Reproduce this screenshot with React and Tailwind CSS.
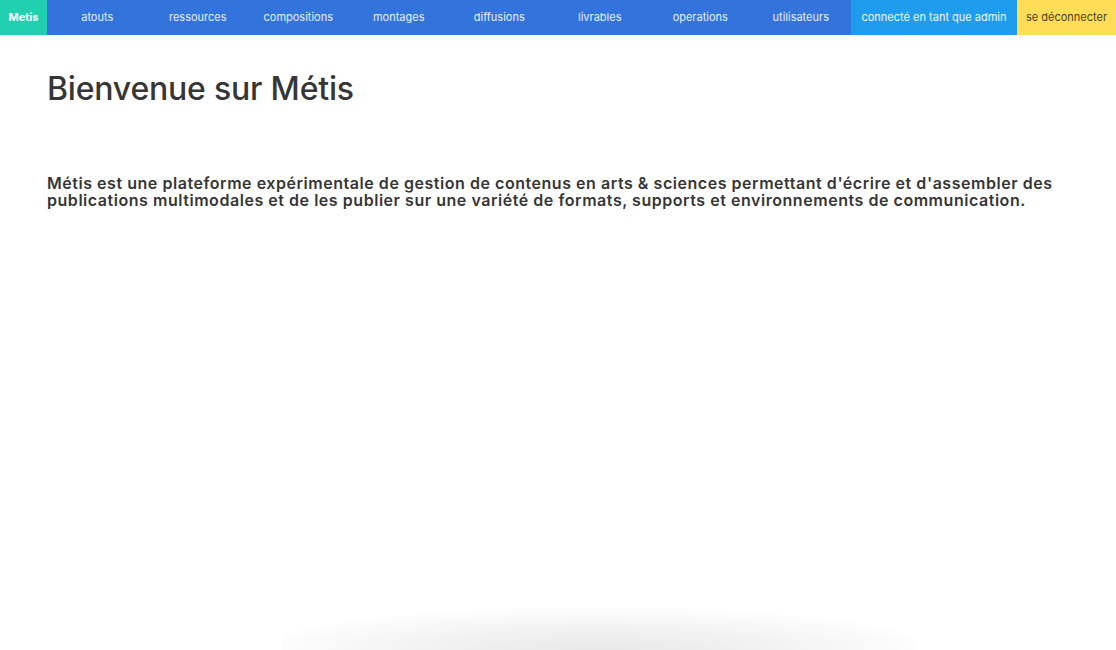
import React from 'react';

const navItems = ['atouts', 'ressources', 'compositions', 'montages', 'diffusions', 'livrables', 'operations', 'utilisateurs'];

const App = () => {
  return (
    <div className="flex flex-col min-h-[650px] bg-white font-['Inter','Liberation_Sans',sans-serif] text-[#363636] overflow-hidden">
      <nav className="flex h-[35px] text-[11px] leading-none">
        <a className="flex items-center justify-center w-[47px] bg-[#1fd0b1] text-white font-bold">Metis</a>
        <div className="flex flex-1 bg-[#3273dc]">
          {navItems.map((item) => (
            <a key={item} className="flex flex-1 items-center justify-center text-[#e9effa]">
              {item}
            </a>
          ))}
        </div>
        <a className="flex items-center justify-center w-[166px] bg-[#209cee] text-[#eef7fd]">connecté en tant que admin</a>
        <a className="flex items-center justify-center w-[99px] bg-[#ffdd57] text-[#4a4030]">se déconnecter</a>
      </nav>

      <main className="px-[47px] pt-[36px]">
        <h1 className="text-[32px] font-medium leading-[36px] tracking-[-0.2px]">Bienvenue sur Métis</h1>
        <p className="mt-[68px] text-[16px] font-semibold leading-[17px] tracking-[0.54px] text-[#363636]">
          Métis est une plateforme expérimentale de gestion de contenus en arts &amp; sciences permettant d'écrire et d'assembler des publications multimodales et de les publier sur une variété de formats, supports et environnements de communication.
        </p>
      </main>

      <div className="mt-auto ml-[282px] w-[632px] h-[44px] bg-[radial-gradient(ellipse_55%_100%_at_50%_100%,#e8e8e8_0%,#f3f3f3_55%,#ffffff_100%)]" />
    </div>
  );
};

export default App;
